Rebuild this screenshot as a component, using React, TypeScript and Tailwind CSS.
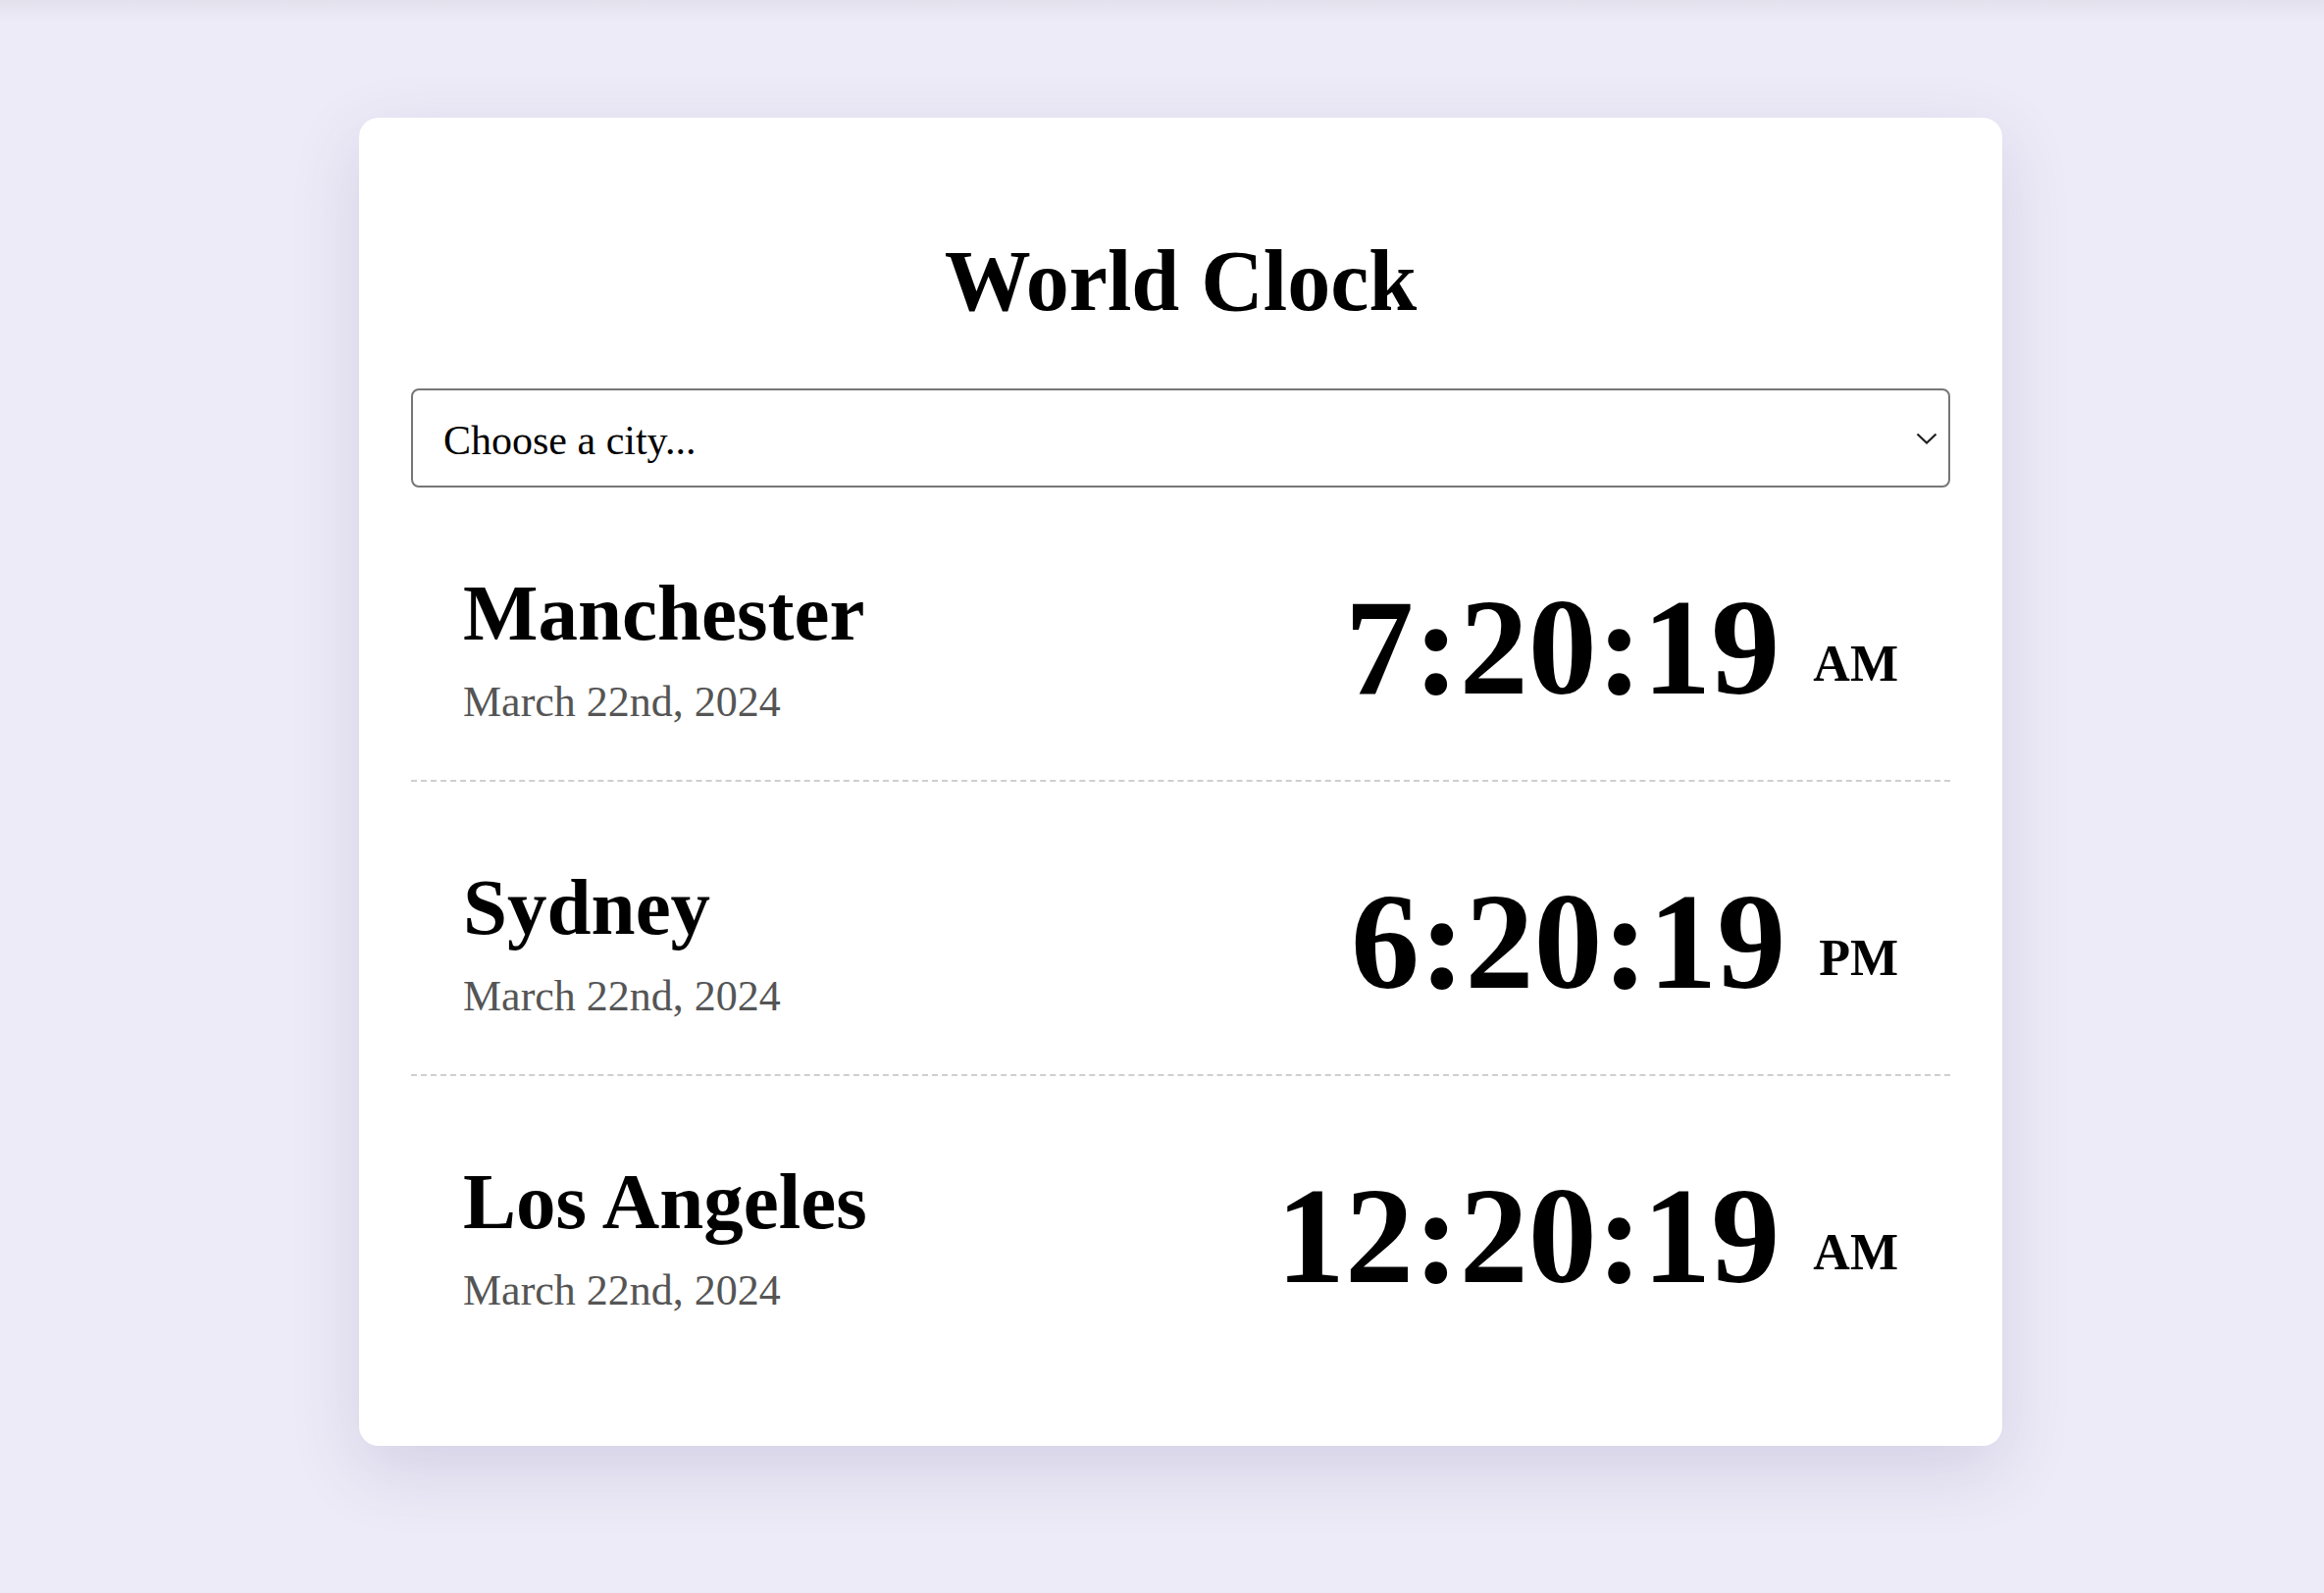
import React from "react";

const cities = [
  { name: "Manchester", date: "March 22nd, 2024", time: "7:20:19", period: "AM" },
  { name: "Sydney", date: "March 22nd, 2024", time: "6:20:19", period: "PM" },
  { name: "Los Angeles", date: "March 22nd, 2024", time: "12:20:19", period: "AM" },
];

const App = () => {
  return (
    <div className="min-h-screen bg-[#edebf7] bg-[linear-gradient(to_bottom,#e3e1ec_0px,#edebf7_22px)] pt-[120px] pl-[38px] flex justify-center font-['Liberation_Serif',serif] text-black">
      <div className="w-[1675px] h-[1354px] bg-white rounded-[20px] shadow-[0_24px_70px_rgba(80,70,140,0.16)] px-[53px] pt-[123px]">
        <h1 className="text-center text-[88px] font-bold leading-none">World Clock</h1>

        <div className="relative mt-[65px]">
          <select
            defaultValue=""
            className="w-full h-[101px] appearance-none rounded-[8px] border-2 border-[#767676] bg-white pl-[31px] pt-[5px] text-[42px] text-black outline-none"
          >
            <option value="" disabled>
              Choose a city...
            </option>
            <option value="manchester">Manchester</option>
            <option value="sydney">Sydney</option>
            <option value="los-angeles">Los Angeles</option>
          </select>
          <svg
            className="pointer-events-none absolute right-[13px] top-1/2 -translate-y-1/2 w-[22px] h-[12px]"
            viewBox="0 0 22 12"
            fill="none"
          >
            <path d="M1.5 1.5 L11 10.5 L20.5 1.5" stroke="#1f1f1f" strokeWidth="2.2" />
          </svg>
        </div>

        <div>
          {cities.map((city, i) => (
            <div
              key={city.name}
              className={
                i < cities.length - 1
                  ? "flex h-[300px] items-start justify-between px-[53px] pt-[84px] border-b-2 border-dashed border-[#cfcfcf]"
                  : "flex h-[300px] items-start justify-between px-[53px] pt-[84px]"
              }
            >
              <div>
                <h2 className="text-[81px] font-bold leading-[88px]">{city.name}</h2>
                <p className="mt-[23px] text-[44px] leading-[48px] text-[#555555]">{city.date}</p>
              </div>
              <div className="mt-[9px] whitespace-nowrap text-[140px] font-bold leading-none">
                {city.time}
                <span className="ml-[34px] align-[13px] text-[52px]">{city.period}</span>
              </div>
            </div>
          ))}
        </div>
      </div>
    </div>
  );
};

export default App;
